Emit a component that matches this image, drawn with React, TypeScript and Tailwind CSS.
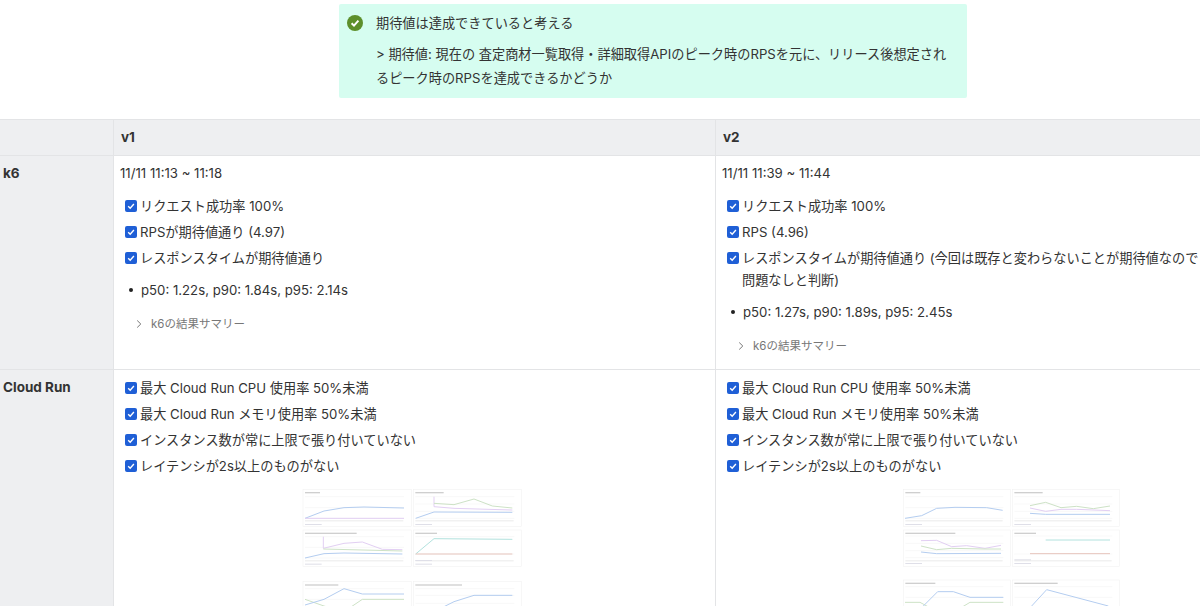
import type { ReactNode } from "react"

const font = { fontFamily: 'Inter, "Noto Sans CJK JP", sans-serif' }

type Line = { points: string; color: string; width?: number }
type Panel = { x: number; y: number; w: number; h: number; titleW: number; grid: number[]; lines: Line[]; legend: number[] }

const BLUE = "#b4cdf0"
const GREEN = "#cde2c6"
const PURPLE = "#e2cff3"
const TEAL = "#b2e2de"
const RED = "#e6c4bc"

const leftPanels: Panel[] = [
  { x: 27, y: 28, w: 325, h: 112, titleW: 45, grid: [50, 83, 115], legend: [133], lines: [
    { points: "33,115 90,93 150,83 210,81 330,84", color: BLUE },
    { points: "33,115 330,115", color: PURPLE },
  ] },
  { x: 358, y: 28, w: 325, h: 112, titleW: 85, grid: [50, 72, 94, 115], legend: [133], lines: [
    { points: "420,50 420,80 480,85 655,90", color: PURPLE },
    { points: "420,70 480,74 540,57 595,78 655,84", color: GREEN },
    { points: "365,115 420,96 655,97", color: BLUE },
  ] },
  { x: 27, y: 150, w: 325, h: 110, titleW: 155, grid: [170, 202, 234], legend: [252], lines: [
    { points: "88,170 88,205 150,190 205,186 265,208 325,209", color: PURPLE },
    { points: "88,207 325,213", color: GREEN },
    { points: "33,234 90,221 150,219 325,222", color: BLUE },
  ] },
  { x: 358, y: 150, w: 325, h: 110, titleW: 65, grid: [170, 222], legend: [241, 252], lines: [
    { points: "365,222 420,176 655,178", color: TEAL },
    { points: "365,222 655,222", color: RED, width: 3 },
  ] },
  { x: 27, y: 305, w: 325, h: 90, titleW: 100, grid: [326, 358], legend: [], lines: [
    { points: "33,358 90,378 150,395 205,358 330,358", color: GREEN },
    { points: "33,375 90,358 150,326 205,342 330,342", color: BLUE },
  ] },
  { x: 358, y: 305, w: 325, h: 90, titleW: 140, grid: [326, 346, 370], legend: [], lines: [
    { points: "420,395 480,365 540,346 655,346", color: BLUE },
  ] },
]

const rightPanels: Panel[] = [
  { x: 25, y: 28, w: 322, h: 112, titleW: 45, grid: [50, 83, 115], legend: [133], lines: [
    { points: "30,115 80,107 125,85 180,82 275,83 323,91", color: BLUE },
  ] },
  { x: 352, y: 28, w: 322, h: 112, titleW: 85, grid: [50, 72, 94, 115], legend: [133], lines: [
    { points: "405,77 452,67 498,83 545,79 595,86 645,78", color: GREEN },
    { points: "405,84 452,94 498,88 545,88 645,92", color: PURPLE },
    { points: "405,100 452,103 645,103", color: BLUE },
  ] },
  { x: 25, y: 150, w: 322, h: 110, titleW: 150, grid: [168, 190, 212, 233], legend: [250], lines: [
    { points: "78,182 125,181 170,200 215,197 270,205 318,196", color: PURPLE },
    { points: "78,198 125,209 170,205 270,207 318,207", color: GREEN },
    { points: "78,216 125,221 318,220", color: BLUE },
  ] },
  { x: 352, y: 150, w: 322, h: 110, titleW: 65, grid: [168, 222], legend: [239, 250], lines: [
    { points: "452,180 645,180", color: TEAL },
    { points: "405,221 645,221", color: RED, width: 3 },
  ] },
  { x: 25, y: 300, w: 322, h: 95, titleW: 90, grid: [320, 352], legend: [], lines: [
    { points: "30,367 75,367 108,385 195,385 225,367 325,367", color: GREEN },
    { points: "85,378 128,335 175,335 225,352 325,352", color: BLUE },
  ] },
  { x: 352, y: 300, w: 322, h: 95, titleW: 130, grid: [320, 352], legend: [], lines: [
    { points: "410,378 455,329 640,378", color: BLUE },
  ] },
]

// dashboard thumbnail, too small to read in the picture
function Dashboard({ panels }: { panels: Panel[] }) {
  return (
    <svg viewBox="24 24 660 354" width={220} height={118} className="block blur-[0.5px]">
      {panels.map((p, i) => (
        <g key={i}>
          <rect x={p.x} y={p.y} width={p.w} height={p.h} fill="#fff" stroke="#f0f0f0" strokeWidth={1.5} />
          <rect x={p.x + 6} y={p.y + 8} width={p.titleW} height={4} fill="#cfcfcf" />
          {p.grid.map((g) => (
            <line key={g} x1={p.x + 6} x2={p.x + p.w - 22} y1={g} y2={g} stroke="#f0f0f0" strokeWidth={1.5} />
          ))}
          {p.lines.map((l, j) => (
            <polyline key={j} points={l.points} fill="none" stroke={l.color} strokeWidth={l.width ?? 3} />
          ))}
          {p.h > 100 && <rect x={p.x + 6} y={p.y + p.h - 19} width={p.w - 30} height={3} fill="#ebebeb" />}
          {p.legend.map((y) => (
            <rect key={y} x={p.x + 6} y={y - 1} width={50} height={3} fill="#dfdfe8" />
          ))}
        </g>
      ))}
    </svg>
  )
}

function CheckItem({ children }: { children: ReactNode }) {
  return (
    <li className="flex py-[2px]">
      <span className="mt-[5px] mr-[3px] flex h-[12px] w-[12px] shrink-0 items-center justify-center rounded-[2px] bg-[#1f5fd6]">
        <svg viewBox="0 0 12 12" className="h-[12px] w-[12px]">
          <path d="M3.2 6.2 5.2 8.2 8.9 4" fill="none" stroke="#fff" strokeWidth={1.4} />
        </svg>
      </span>
      <span>{children}</span>
    </li>
  )
}

function Bullet({ children }: { children: ReactNode }) {
  return (
    <div className="mt-[8px] flex items-center">
      <span className="mr-[8px] ml-[9px] h-[4px] w-[4px] rounded-full bg-[#222]" />
      <span>{children}</span>
    </div>
  )
}

function Summary() {
  return (
    <div className="mt-[11.5px] flex items-center pl-[13px] text-[11.5px] text-[#777]">
      <svg viewBox="0 0 12 12" className="mr-[6px] h-[12px] w-[12px]">
        <path d="M4.2 2.5 7.8 6 4.2 9.5" fill="none" stroke="#777" strokeWidth={1} />
      </svg>
      k6の結果サマリー
    </div>
  )
}

const cloudRunChecks = [
  "最大 Cloud Run CPU 使用率 50%未満",
  "最大 Cloud Run メモリ使用率 50%未満",
  "インスタンス数が常に上限で張り付いていない",
  "レイテンシが2s以上のものがない",
]

function CloudRunCell({ panels, last }: { panels: Panel[]; last?: boolean }) {
  return (
    <div className={last ? "pt-[4.5px] pl-[11px]" : "border-r border-[#e3e4e6] pt-[4.5px] pl-[11px]"}>
      <ul>
        {cloudRunChecks.map((c) => (
          <CheckItem key={c}>{c}</CheckItem>
        ))}
      </ul>
      <div className={last ? "mt-[9px] ml-[176px]" : "mt-[9px] ml-[177px]"}>
        <Dashboard panels={panels} />
      </div>
    </div>
  )
}

export default function App() {
  return (
    <div style={font} className="h-[606px] w-[1200px] overflow-hidden bg-white text-[13.2px] leading-[22px] text-[#333]">
      <div className="pt-[4px] pl-[339px]">
        <div className="h-[94px] w-[628px] rounded-[2px] bg-[#d6fdf0] pt-[8px] pr-[18px] pl-[8px]">
          <div className="flex items-center">
            <svg viewBox="0 0 16 16" className="h-[16px] w-[16px]">
              <circle cx="8" cy="8" r="8" fill="#5d8f2b" />
              <path d="M4.6 8.2 7 10.6 11.4 5.6" fill="none" stroke="#fff" strokeWidth={2} />
            </svg>
            <span className="ml-[13px]">期待値は達成できていると考える</span>
          </div>
          <p className="mt-[9px] pl-[29px] leading-[23.5px]">
            &gt; 期待値: 現在の 査定商材一覧取得・詳細取得APIのピーク時のRPSを元に、リリース後想定されるピーク時のRPSを達成できるかどうか
          </p>
        </div>
      </div>

      <div className="mt-[21px] grid grid-cols-[114px_602px_484px] grid-rows-[36px_214px_1fr] border-t border-[#e3e4e6]">
        <div className="border-r border-b border-[#e3e4e6] bg-[#eeeff1]" />
        <div className="flex items-center border-r border-b border-[#e3e4e6] bg-[#eeeff1] pb-[2px] pl-[7px] text-[13.5px] font-bold">v1</div>
        <div className="flex items-center border-b border-[#e3e4e6] bg-[#eeeff1] pb-[2px] pl-[7px] text-[13.5px] font-bold">v2</div>

        <div className="border-r border-b border-[#e3e4e6] bg-[#eeeff1] pt-[6px] pl-[3px] text-[13.5px] font-bold">k6</div>
        <div className="border-r border-b border-[#e3e4e6] pt-[6px] pl-[6px]">
          <div>11/11 11:13 ~ 11:18</div>
          <ul className="mt-[9px] ml-[5px]">
            <CheckItem>リクエスト成功率 100%</CheckItem>
            <CheckItem>RPSが期待値通り (4.97)</CheckItem>
            <CheckItem>レスポンスタイムが期待値通り</CheckItem>
          </ul>
          <Bullet>p50: 1.22s, p90: 1.84s, p95: 2.14s</Bullet>
          <Summary />
        </div>
        <div className="border-b border-[#e3e4e6] pt-[6px] pl-[6px]">
          <div>11/11 11:39 ~ 11:44</div>
          <ul className="mt-[9px] ml-[5px]">
            <CheckItem>リクエスト成功率 100%</CheckItem>
            <CheckItem>RPS (4.96)</CheckItem>
            <CheckItem>レスポンスタイムが期待値通り (今回は既存と変わらないことが期待値なので問題なしと判断)</CheckItem>
          </ul>
          <Bullet>p50: 1.27s, p90: 1.89s, p95: 2.45s</Bullet>
          <Summary />
        </div>

        <div className="border-r border-[#e3e4e6] bg-[#eeeff1] pt-[6px] pl-[3px] text-[13.5px] font-bold">Cloud Run</div>
        <CloudRunCell panels={leftPanels} />
        <CloudRunCell panels={rightPanels} last />
      </div>
    </div>
  )
}
